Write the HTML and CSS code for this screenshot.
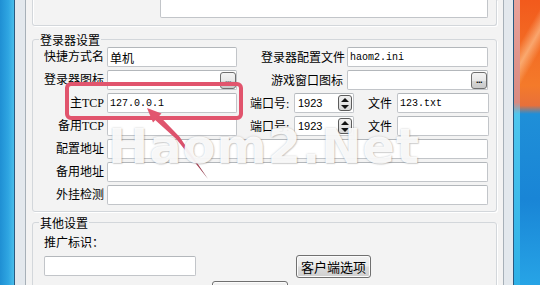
FILE: index.html
```html
<!DOCTYPE html>
<html lang="zh">
<head>
<meta charset="utf-8">
<title>登录器设置</title>
<link rel="stylesheet" href="styles.css">
</head>
<body>
<div class="desk desk-l"></div>
<div class="win">
  <div class="client">
    <div class="grp-top"><div class="tb tb-top"></div></div>

    <fieldset class="grp grp-login">
      <legend>登录器设置</legend>
      <div class="row">
        <span class="lbl">快捷方式名</span>
        <div class="tb w130"><span class="val">单机</span></div>
        <div class="right">
          <span class="lbl2">登录器配置文件</span>
          <div class="tb w141"><span class="val mono">haom2.ini</span></div>
        </div>
      </div>
      <div class="row">
        <span class="lbl">登录器图标</span>
        <div class="tb w130 browse"><span class="val"></span><span class="dots">...</span></div>
        <div class="right">
          <span class="lbl2 lbl2b">游戏窗口图标</span>
          <div class="tb w141 browse"><span class="val"></span><span class="dots">...</span></div>
        </div>
      </div>
      <div class="row">
        <span class="lbl">主TCP</span>
        <div class="tb w130"><span class="val mono">127.0.0.1</span></div>
        <span class="lbl3">端口号:</span>
        <div class="tb spin"><span class="val num">1923</span><span class="spinbtns"><i class="up"></i><i class="dn"></i></span></div>
        <span class="lbl4">文件</span>
        <div class="tb w92"><span class="val mono">123.txt</span></div>
      </div>
      <div class="row">
        <span class="lbl">备用TCP</span>
        <div class="tb w130"><span class="val"></span></div>
        <span class="lbl3">端口号:</span>
        <div class="tb spin"><span class="val num">1923</span><span class="spinbtns"><i class="up"></i><i class="dn"></i></span></div>
        <span class="lbl4">文件</span>
        <div class="tb w92"><span class="val"></span></div>
      </div>
      <div class="row">
        <span class="lbl">配置地址</span>
        <div class="tb wide"><span class="val"></span></div>
      </div>
      <div class="row">
        <span class="lbl">备用地址</span>
        <div class="tb wide"><span class="val"></span></div>
      </div>
      <div class="row">
        <span class="lbl">外挂检测</span>
        <div class="tb wide"><span class="val"></span></div>
      </div>
    </fieldset>

    <fieldset class="grp grp-other">
      <legend>其他设置</legend>
      <div class="promo-lbl">推广标识：</div>
      <div class="promo-row">
        <div class="tb w152"><span class="val"></span></div>
        <button class="btn btn-client">客户端选项</button>
      </div>
      <div class="gen-row">
        <button class="btn btn-gen">生成登录器</button>
      </div>
    </fieldset>
  </div>
</div>
<div class="desk desk-r"><div class="desk-r-edge"></div><div class="desk-r-main"></div></div>

<svg class="overlay" width="540" height="285" viewBox="0 0 540 285" xmlns="http://www.w3.org/2000/svg">
  <defs>
    <linearGradient id="tail" x1="155" y1="116" x2="208" y2="179" gradientUnits="userSpaceOnUse">
      <stop offset="0" stop-color="#e2566f"/>
      <stop offset="0.55" stop-color="#d9506a"/>
      <stop offset="1" stop-color="#7e3442"/>
    </linearGradient>
  </defs>
  <rect x="67" y="84" width="174" height="34" rx="4" ry="4" fill="none" stroke="#e1546d" stroke-width="4"/>
  <polygon points="147,108 161.5,113.5 153,122.5" fill="#e2566f"/>
  <polygon points="157.5,114 179.5,136.7 208,179 176.5,139.3 153.5,118.5" fill="url(#tail)"/>
</svg>
<div class="watermark">Haom2.Net</div>
</body>
</html>
```

FILE: styles.css
```css
* { box-sizing: border-box; }

html, body {
  margin: 0;
  padding: 0;
}

body {
  width: 540px;
  height: 285px;
  overflow: hidden;
  display: flex;
  position: relative;
  font-family: "Liberation Serif", "Noto Sans CJK SC", serif;
  font-size: 12px;
  color: #000;
  background: #2a9ad9;
}

.desk-l {
  width: 14px;
  flex: none;
  background: linear-gradient(90deg, #1f8fd3 0%, #2fa6e2 60%, #49bdea 100%),
              #2a9ad9;
}

.desk-r {
  width: 26px;
  flex: none;
  display: flex;
}

.desk-r-edge {
  width: 6px;
  background: linear-gradient(180deg, #e9a29a 0%, #d98a80 36%, #4ec6ee 40%, #2fb0e6 100%);
}

.desk-r-main {
  flex: 1;
  background:
    linear-gradient(120deg, rgba(255,255,255,0) 30%, rgba(255,215,170,0.55) 45%, rgba(255,255,255,0) 60%) 0 0 / 100% 38% no-repeat,
    linear-gradient(180deg, #f25a1c 0%, #f47a2a 30%, #e8703a 37%, #1f8fd8 40%, #1985d6 70%, #27a4e6 100%);
}

.win {
  width: 500px;
  height: 285px;
  flex: none;
  display: flex;
  border-left: 1px solid #2a5a80;
  border-right: 1px solid #2a5a80;
  background: #e3e8ed;
  padding: 0 9px 0 10px;
}

.client {
  flex: 1;
  height: 285px;
  overflow: hidden;
  border-left: 1px solid #a7b0b8;
  border-right: 1px solid #a7b0b8;
  background: #f3f3f3;
  display: flex;
  flex-direction: column;
}

/* group boxes */
.grp-top {
  margin: 0 6px;
  height: 26px;
  border: 1px solid #d3d7db;
  border-top: none;
  border-radius: 0 0 3px 3px;
  box-shadow: inset 1px 0 #fff, 1px 1px #fff;
  flex: none;
}

.tb-top {
  margin: -2px 0 0 127px;
  width: 328px;
  height: 20px;
}

fieldset.grp {
  margin: 7px 6px 0;
  padding: 1px 0 6px 0;
  border: 1px solid #d3d7db;
  border-radius: 3px;
  min-width: 0;
  flex: none;
  box-shadow: 1px 1px #fff;
}

fieldset.grp legend {
  padding: 0 1px;
  margin-left: 6px;
  font-size: 12px;
  line-height: 13px;
  font-family: "Noto Sans CJK SC", sans-serif;
}

fieldset.grp.grp-other {
  margin-top: 4px;
  height: 80px;
  padding-bottom: 0;
}

/* rows */
.row {
  display: flex;
  align-items: center;
  height: 20px;
  margin-bottom: 3px;
}
.row:last-child { margin-bottom: 0; }

.lbl {
  width: 71px;
  text-align: right;
  margin-right: 3px;
  white-space: nowrap;
  line-height: 16px;
}

.right {
  width: 259px;
  display: flex;
  justify-content: flex-end;
  align-items: center;
  padding-right: 8px;
}

.lbl2 { margin-right: 2px; white-space: nowrap; }
.lbl2b { margin-right: 4px; }

.lbl3 {
  margin-left: 13px;
  width: 44px;
  white-space: nowrap;
}

.lbl4 {
  margin-left: 14px;
  width: 29px;
  white-space: nowrap;
}

/* text boxes */
.tb {
  height: 20px;
  background: #fff;
  border: 1px solid #c2c5c9;
  border-top-color: #b3b7bb;
  border-radius: 2px;
  display: flex;
  align-items: center;
  flex: none;
}

.w130 { width: 130px; }
.w141 { width: 141px; }
.w92 { width: 92px; }
.w152 { width: 152px; }
.wide { width: 381px; }

.val {
  flex: 1;
  padding-left: 2px;
  font-family: "Noto Sans CJK SC", sans-serif;
  font-size: 12px;
  line-height: 17px;
  white-space: nowrap;
}

.val.mono {
  font-family: "Liberation Mono", monospace;
  font-size: 10px;
}

.val.num {
  font-family: "Liberation Sans", sans-serif;
  font-size: 11px;
  padding-left: 3px;
}

.browse { justify-content: space-between; }

.dots {
  width: 16px;
  height: 17px;
  border: 1px solid #6f6f6f;
  border-radius: 3px;
  background: linear-gradient(180deg, #f4f4f4 0%, #e8e8e8 50%, #d8d8d8 51%, #c9c9c9 100%);
  font-family: "Liberation Sans", sans-serif;
  font-size: 9px;
  font-weight: bold;
  line-height: 10px;
  text-align: center;
  display: flex;
  align-items: flex-end;
  justify-content: center;
  padding-bottom: 3px;
  letter-spacing: -0.5px;
  flex: none;
}

.spin {
  width: 60px;
  justify-content: space-between;
}

.spinbtns {
  width: 14px;
  height: 16px;
  margin-right: 1px;
  border: 1px solid #5c5c5c;
  border-radius: 3px;
  background: linear-gradient(180deg, #f0f0f0 0%, #d6d6d6 100%);
  display: flex;
  flex-direction: column;
  align-items: center;
  justify-content: space-around;
  flex: none;
}

.spinbtns i {
  display: block;
  width: 0;
  height: 0;
  border-left: 4px solid transparent;
  border-right: 4px solid transparent;
}
.spinbtns .up { border-bottom: 4px solid #111; }
.spinbtns .dn { border-top: 4px solid #111; }

/* other settings */
.promo-lbl {
  padding: 4px 0 0 11px;
  line-height: 16px;
  font-family: "Noto Sans CJK SC", sans-serif;
  font-size: 12px;
}

.promo-row {
  display: flex;
  align-items: flex-start;
  margin: 6px 0 0 11px;
}

.btn {
  height: 23px;
  padding: 0;
  border: 1px solid #707070;
  border-radius: 3px;
  background: linear-gradient(180deg, #f2f2f2 0%, #ebebeb 48%, #dddddd 52%, #cfcfcf 100%);
  box-shadow: inset 0 0 0 1px #fbfbfb;
  font-family: "Noto Sans CJK SC", sans-serif;
  font-size: 13px;
  line-height: 20px;
  color: #000;
}

.btn-client {
  width: 75px;
  margin: -1px 0 0 100px;
}

.gen-row {
  margin: 3px 0 0 179px;
  height: 5px;
}

.btn-gen { width: 76px; }

/* overlays */
.overlay {
  position: absolute;
  left: 0;
  top: 0;
  pointer-events: none;
}

.watermark {
  position: absolute;
  left: 108px;
  top: 122px;
  font-family: "DejaVu Sans", sans-serif;
  font-weight: bold;
  font-size: 48px;
  line-height: 48px;
  color: rgba(255, 255, 255, 0.93);
  text-shadow: 0 0 2px rgba(90, 90, 90, 0.35), 1px 1px 1px rgba(120, 120, 120, 0.25);
  letter-spacing: 1px;
  white-space: nowrap;
  pointer-events: none;
}
```
